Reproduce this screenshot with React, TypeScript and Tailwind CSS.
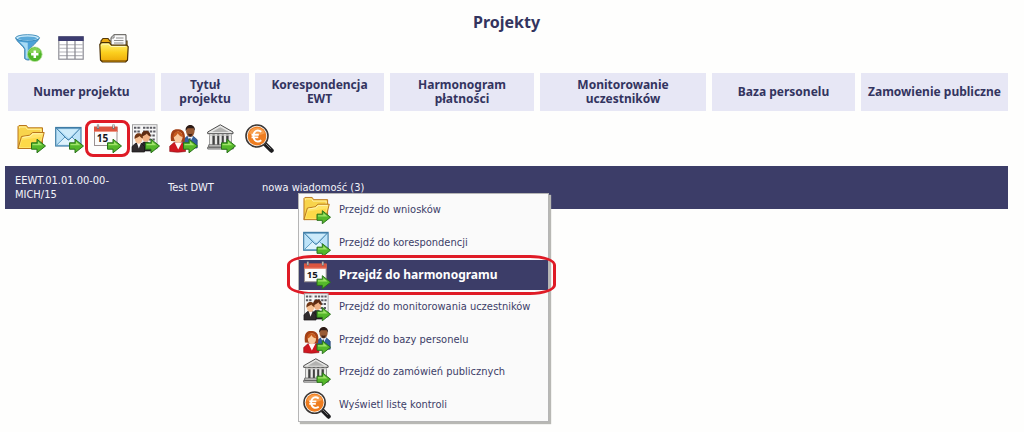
import React from 'react';

type IconProps = { className?: string };

function GreenArrow() {
    return (
        <g strokeLinejoin="round">
            <path d="M14.500 18.800h5.500v-3.600l8.500 6.800-8.500 6.800v-3.600h-5.500z" fill="#55b82a" stroke="#28701a" strokeWidth="1" />
            <path d="M15.500 20h5.500v-2.500l4.500 3.800h-10z" fill="#a1e36a" />
        </g>
    );
}

function FilterIcon({ className }: IconProps) {
    return (
        <svg viewBox="0 0 29 29" className={className} aria-hidden="true">
            <path d="M.8 4c.5 4 8.200 8.500 9.200 12v9.500c1.500 1.500 4 2 5.500 1V16c1-3.500 9-8 9.500-12z" fill="#4da2d8" stroke="#2a719f" strokeWidth=".8" />
            <path d="M4.500 8c3 3 6 5.500 6.500 8v9l2.200 .8V9z" fill="#a9dbf5" />
            <ellipse cx="13" cy="4" rx="12.300" ry="3.300" fill="#c8e9fa" stroke="#3182b4" strokeWidth=".9" />
            <ellipse cx="13" cy="4.500" rx="9.800" ry="2" fill="#5aa9d9" />
            <circle cx="20.500" cy="21" r="7.600" fill="#4fb52a" stroke="#b7e39b" strokeWidth=".8" />
            <path d="M14.200 19a6.600 6.600 0 0 1 12.600 0c-4 2-8 2-12.600 0z" fill="#83d153" />
            <path d="M20.500 17.200v7.600M16.700 21h7.600" stroke="#fff" strokeWidth="2.600" />
        </svg>
    );
}

function GridIcon({ className }: IconProps) {
    return (
        <svg viewBox="0 0 26 24" className={className} aria-hidden="true">
            <rect x=".8" y=".8" width="24.400" height="22.400" fill="#fff" stroke="#8e8e96" strokeWidth="1.200" />
            <rect x=".3" y=".3" width="25.400" height="4.700" fill="#3c3c70" />
            <path d="M1 8.700h24M1 12.300h24M1 16h24M1 19.600h24" stroke="#b4b4ba" strokeWidth="1.100" />
            <path d="M9 5v18M17 5v18" stroke="#85858e" strokeWidth="1.200" />
        </svg>
    );
}

function DocumentsIcon({ className }: IconProps) {
    return (
        <svg viewBox="0 0 30 29" className={className} aria-hidden="true">
            <defs>
                <linearGradient id="docs-front" x1="0" y1="0" x2="0" y2="1">
                    <stop offset="0" stopColor="#fff27a" />
                    <stop offset=".5" stopColor="#fcd01f" />
                    <stop offset="1" stopColor="#eda806" />
                </linearGradient>
            </defs>
            <path d="M2 26V7l2-2.500h5l2 2.500h17v19z" fill="#e9a810" stroke="#553908" strokeWidth="1.200" />
            <path d="M12 13V3.500L15 .7h12V13z" fill="#fafafa" stroke="#55534e" />
            <path d="M15 .7V4h-3" fill="none" stroke="#777" />
            <path d="M17 4h7.500M15 6.500h9.500M15 9h9.500" stroke="#8e8e8e" strokeWidth="1" />
            <path d="M.8 10.500 2.300 8.700h8l2.200 2.500h15.200l1.500 1.500-.7 13.300-2 2h-23l-2-2z" fill="url(#docs-front)" stroke="#4a2f05" strokeWidth="1.200" strokeLinejoin="round" />
            <path d="M2.500 11.500c.300-1 .800-1.300 1.500-1.300h5.500l2.200 2.300h15" stroke="#fff8b5" fill="none" />
            <path d="M3 26.800h24" stroke="#8b5a08" strokeWidth="1" />
        </svg>
    );
}

function FolderIcon({ className }: IconProps) {
    return (
        <svg viewBox="0 0 29 29" className={className} aria-hidden="true">
            <path d="M1 24.500V2.500l1-1h7.500l1.500 2.300h14.500v17.700z" fill="#f8d44c" stroke="#b9761d" strokeLinejoin="round" />
            <path d="M2.500 4.500V3h6.300l1.500 2.300H24v3" stroke="#ffefa0" fill="none" />
            <path d="M1 24.500 4.500 12.500l8-1.300 3-2.700h11.700l-4 16z" fill="#ffe469" stroke="#b9761d" strokeLinejoin="round" />
            <path d="m5.500 13.500 7.500-1.200 3-2.500h9.500" stroke="#fff5b0" fill="none" />
            <path d="m3 23 2-7 19-3-2.500 10z" fill="#fdd948" />
            <GreenArrow />
        </svg>
    );
}

function MailIcon({ className }: IconProps) {
    return (
        <svg viewBox="0 0 29 29" className={className} aria-hidden="true">
            <rect x=".7" y="3.500" width="25.300" height="18.500" fill="#bde3f8" stroke="#427ea6" strokeWidth="1.200" />
            <path d="M1.300 21.400 10 13l3.500 3 3.500-3 8.400 8.400z" fill="#dff3fd" stroke="#5d9bc2" />
            <path d="m1.300 4.100 10.700 11q1.400 1.200 2.800 0l10.600-11z" fill="#a9d8f3" stroke="#3c7aa4" />
            <path d="M3.500 5.200h19.800L14 14.200z" fill="#cdebfa" />
            <GreenArrow />
        </svg>
    );
}

function CalendarIcon({ className }: IconProps) {
    return (
        <svg viewBox="0 0 29 29" className={className} aria-hidden="true">
            <rect x="1.500" y="3.500" width="22.500" height="18" fill="#fcfcfc" stroke="#9b9292" />
            <path d="M1 2.500h23.500V8H1z" fill="#dc5540" />
            <path d="M1.500 7.500h22.500" stroke="#ee9684" />
            <path d="M5 .5v4.500M20.500 .5v4.500" stroke="#747474" strokeWidth="2.200" />
            <path d="M5 .8v3.200M20.500 .8v3.200" stroke="#ececec" strokeWidth=".8" />
            <text x="9.500" y="17.500" textAnchor="middle" fontSize="10" fontWeight="700" fontFamily="'Open Sans', sans-serif" fill="#17171b">15</text>
            <GreenArrow />
        </svg>
    );
}

function ParticipantsIcon({ className }: IconProps) {
    return (
        <svg viewBox="0 0 29 29" className={className} aria-hidden="true">
            <rect x="1.500" y=".7" width="24.500" height="24" fill="#f8f8f8" stroke="#a2a2a2" />
            <path d="M3 3.700h7M12 3.700h12.500M12 7.500h12.500M3 7.500h6M18 11.500h6.500M18 15.500h6.500" stroke="#5b5b62" strokeWidth="2.100" strokeDasharray="2.400 1" />
            <path d="M9.500 27v-6l3-3h4l4 3v6z" fill="#292529" stroke="#111" strokeWidth=".6" />
            <ellipse cx="15" cy="12.500" rx="4" ry="5.200" fill="#efb185" />
            <path d="M10.500 13c-1.500-8 9.500-8.500 9-.500-2-.500-3-1.700-3.500-3-1.500 1.500-3 2-5.500 3.500z" fill="#5c2b13" />
            <path d="M1 28v-5.500L5 19h5l3.500 3.500V28z" fill="#302b2d" stroke="#171416" strokeWidth=".7" />
            <path d="m6 19 1.800 5.500L10 19z" fill="#fff" />
            <ellipse cx="7.700" cy="15" rx="3.800" ry="4.700" fill="#f8c396" />
            <path d="M3.600 15c-1-7.500 9-7.500 8.300-.5-2-.500-2.700-1.700-3.200-2.500-1.300 1.300-3 1.500-5.100 3z" fill="#713714" />
            <GreenArrow />
        </svg>
    );
}

function StaffIcon({ className }: IconProps) {
    return (
        <svg viewBox="0 0 29 29" className={className} aria-hidden="true">
            <path d="M14 24v-8l4-3.500h6.500l3.700 3.300V24z" fill="#315f9e" stroke="#193b6c" strokeWidth=".7" />
            <path d="m18.500 12.500 2.700 5 3-5z" fill="#e9f3ff" />
            <path d="m20.500 14-.8 6 1.500 2 1-2-.8-6z" fill="#172e60" />
            <ellipse cx="21.300" cy="7.200" rx="4.200" ry="5.700" fill="#985a34" />
            <path d="M16.700 7C15.500-1 27-1 25.900 7l-1.300-2.700h-6z" fill="#2c1a15" />
            <path d="M19 9.500q2.200 1 4.500 0c-.5 4-4 4-4.500 0z" fill="#422319" />
            <path d="M2 17C.5 5 6 5 9.500 5.300 15 5.500 17 10 15.500 18z" fill="#a34016" />
            <path d="M.7 27.500v-5.300L5 18.500h8.500l3 3.500v5.500q-8 1.500-15.800 0z" fill="#cf1720" stroke="#8c1117" strokeWidth=".6" />
            <path d="m5.700 18.500 3.500 7 3.700-7z" fill="#fffafa" />
            <ellipse cx="9.200" cy="13.200" rx="4.300" ry="5.600" fill="#f9c99e" />
            <path d="M4.300 13.500C4 6 12 5 14 13c-3-.5-4.500-2-5.200-3.700-1.200 1.800-2 2.700-4.500 4.200z" fill="#c65a1d" />
            <GreenArrow />
        </svg>
    );
}

function InstitutionIcon({ className }: IconProps) {
    return (
        <svg viewBox="0 0 29 29" className={className} aria-hidden="true">
            <path d="M.7 9.700V8L13.300.8 26 8v1.700z" fill="#e5e5e3" stroke="#4d4d4d" strokeLinejoin="round" />
            <path d="m5 8 8.300-4.800L22 8z" fill="#b2b2b0" />
            <path d="M2.500 10h22v11h-22z" fill="#414141" />
            <path d="M4.200 10v11M9 10v11M13.500 10v11M18 10v11M22.800 10v11" stroke="#e9e9e7" strokeWidth="2.400" />
            <path d="M2.500 11h22" stroke="#cacac8" strokeWidth="1.400" />
            <path d="M1.700 20.800h23.500v2.500H1.700zM.7 23h25.600v2H.7z" fill="#d4d4d2" stroke="#555" strokeWidth=".8" />
            <GreenArrow />
        </svg>
    );
}

function AuditIcon({ className }: IconProps) {
    return (
        <svg viewBox="0 0 29 29" className={className} aria-hidden="true">
            <path d="m19.500 19.500 7 7" stroke="#1d1d1f" strokeWidth="4.500" strokeLinecap="round" />
            <path d="m20.500 19.500 5 5" stroke="#858585" strokeWidth="1" strokeLinecap="round" />
            <circle cx="12" cy="12" r="11" fill="#fff" stroke="#3c3836" strokeWidth="1.600" />
            <circle cx="12" cy="12" r="9.400" fill="#ee7d20" />
            <path d="M4 9.500a8.500 8.500 0 0 1 16-.2q-8 4-16 .2z" fill="#f79d4b" />
            <path d="M16.300 7.800c-4-3-7.800-.5-7.800 4.200s3.800 7.200 7.800 4.200M6.500 10.700h7.300M6.500 13.400h6.800" fill="none" stroke="#fff" strokeWidth="1.900" />
        </svg>
    );
}

const columns = [
    { label: 'Numer projektu', width: 'w-[153px]' },
    { label: 'Tytuł projektu', width: 'w-[94px]' },
    { label: 'Korespondencja EWT', width: 'w-[135px]' },
    { label: 'Harmonogram płatności', width: 'w-[150px]' },
    { label: 'Monitorowanie uczestników', width: 'w-[172px]' },
    { label: 'Baza personelu', width: 'w-[149px]' },
    { label: 'Zamowienie publiczne', width: 'w-[150px]' },
];

const actions = [
    { label: 'Przejdź do wniosków', Icon: FolderIcon },
    { label: 'Przejdź do korespondencji', Icon: MailIcon },
    { label: 'Przejdź do harmonogramu', Icon: CalendarIcon, active: true },
    { label: 'Przejdź do monitorowania uczestników', Icon: ParticipantsIcon },
    { label: 'Przejdź do bazy personelu', Icon: StaffIcon },
    { label: 'Przejdź do zamówień publicznych', Icon: InstitutionIcon },
    { label: 'Wyświetl listę kontroli', Icon: AuditIcon },
];

function ContextMenu() {
    return (
        <div
            role="menu"
            className="absolute left-[46px] top-[27px] z-10 grid h-[229px] w-[251px] auto-rows-fr grid-cols-1 border border-[#b5b5b5] bg-[#fafafa] shadow-[2px_2px_1px_#b8b8b4]"
        >
            {actions.map(({ label, Icon, active }) => (
                <div key={label} className="relative grid grid-cols-1">
                    <button
                        type="button"
                        role="menuitem"
                        className={
                            active
                                ? "my-px flex items-center gap-2 whitespace-nowrap bg-[#3c3d68] pl-1 text-left font-['Noto_Sans',sans-serif] text-xs font-bold text-white"
                                : 'my-px flex items-center gap-2 whitespace-nowrap pl-1 text-left text-[#3c3d68]'
                        }
                    >
                        <Icon className="size-7 shrink-0" />
                        {label}
                    </button>
                    {active && (
                        <span className="pointer-events-none absolute -inset-y-1 -left-3 -right-2 rounded-[26px/10px] border-[3px] border-[#df1b26]" />
                    )}
                </div>
            ))}
        </div>
    );
}

export default function App() {
    return (
        <main className="min-h-screen bg-[#fefefd] pb-2 pl-[5px] pr-4 pt-2.5 font-['DejaVu_Sans_Condensed','Noto_Sans',sans-serif] text-[11px] text-[#33345f]">
            <h1 className="text-center font-['Noto_Sans',sans-serif] text-base font-bold leading-6">Projekty</h1>

            <div className="flex h-[39px] items-start gap-3.5 pl-2.5">
                <button type="button" aria-label="Filtruj">
                    <FilterIcon className="size-7" />
                </button>
                <button type="button" aria-label="Kolumny" className="px-px pt-0.5">
                    <GridIcon className="h-6 w-[26px]" />
                </button>
                <button type="button" aria-label="Dokumenty">
                    <DocumentsIcon className="h-[29px] w-[30px]" />
                </button>
            </div>

            <table className="w-full table-fixed border-separate border-spacing-0">
                <thead className="font-['Noto_Sans',sans-serif] text-xs">
                    <tr className="h-[38px]">
                        {columns.map((column) => (
                            <th
                                key={column.label}
                                scope="col"
                                className={`${column.width} border-l-[3px] border-r-[3px] border-[#fefefd] bg-[#e7e7f5] px-1.5 py-0 text-center font-bold leading-[14px] last:border-r-0`}
                            >
                                {column.label}
                            </th>
                        ))}
                    </tr>
                </thead>
                <tbody>
                    <tr>
                        <td colSpan={7} className="h-[55px] p-0">
                            <div className="flex gap-[9px] pl-3">
                                {actions.map(({ label, Icon, active }) => (
                                    <button key={label} type="button" aria-label={label} className="relative">
                                        <Icon className="size-[29px]" />
                                        {active && (
                                            <span className="pointer-events-none absolute -inset-x-2 -inset-y-1 rounded-lg border-[3px] border-[#df1b26]" />
                                        )}
                                    </button>
                                ))}
                            </div>
                        </td>
                    </tr>
                    <tr className="h-[43px] bg-[#3c3d68] leading-[14px] text-[#f4f4fa]">
                        <td className="py-0 pl-2.5 pr-9">EEWT.01.01.00-00-MICH/15</td>
                        <td className="py-0 pl-2.5">Test DWT</td>
                        <td className="relative p-0">
                            <span className="pl-2.5">nowa wiadomość (3)</span>
                            <ContextMenu />
                        </td>
                        <td colSpan={4} />
                    </tr>
                </tbody>
            </table>
        </main>
    );
}
